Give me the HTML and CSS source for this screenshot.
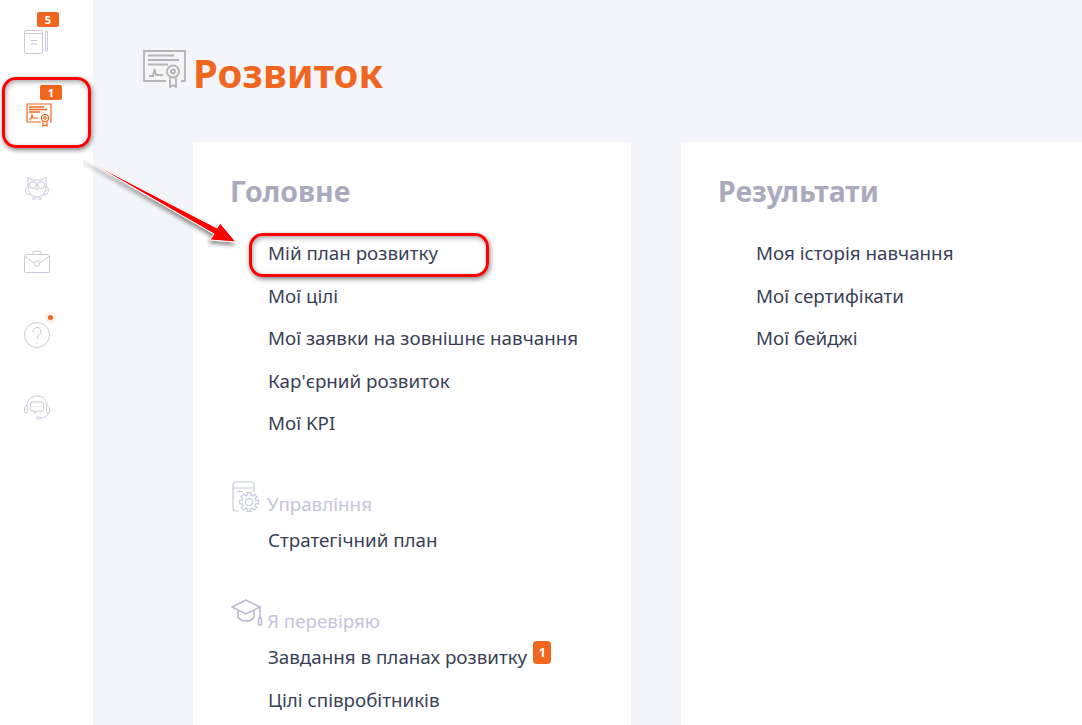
FILE: index.html
```html
<!DOCTYPE html>
<html lang="uk">
<head>
  <meta charset="UTF-8" />
  <title>Розвиток</title>
  <link rel="stylesheet" href="styles.css">
</head>
<body>
  <div class="app">
    <!-- Sidebar -->
    <nav class="sidebar">
      <a class="side-item side-first">
        <span class="side-badge">5</span>
        <svg class="side-icon" width="26" height="26" viewBox="0 0 26 26" fill="none" stroke="#c9c9dc" stroke-width="1">
          <rect x="0.5" y="1.5" width="18" height="23" rx="1.5"/>
          <path d="M0.5 4.5h18M7 11.500h6M7 15h6"/>
          <path d="M21.500 2h2v18l-1 3-1-3z"/>
        </svg>
      </a>
      <a class="side-item side-active">
        <span class="side-badge">1</span>
        <svg class="side-icon" width="26" height="24" viewBox="0 0 26 24" fill="none" stroke="#f0661f" stroke-width="1.200">
          <path d="M15 19H1V1h24v18h-1"/>
          <path d="M3 4h15M3 6.500h18M3 9h11" stroke-width="1.400"/>
          <path d="M3 16h2l1-4 1 3h5"/>
          <circle cx="19" cy="15" r="3.500"/>
          <circle cx="19" cy="15" r="1.200"/>
          <path d="M17 18.500V23l2-1 2 1v-4.500"/>
        </svg>
      </a>
      <a class="side-item">
        <svg class="side-icon" width="26" height="26" viewBox="0 0 26 26" fill="none" stroke="#c9c9dc" stroke-width="1">
          <path d="M4 1l4 3h10l4-3v9c0 7-4 11-9 11S4 17 4 10z"/>
          <circle cx="9" cy="9" r="3.500"/>
          <circle cx="17" cy="9" r="3.500"/>
          <path d="M12 12l1 2 1-2M4 10c-3 2-3 6-1 8l4 1M22 10c3 2 3 6 1 8l-4 1"/>
          <path d="M9 21v3M11 21v3M15 21v3M17 21v3"/>
        </svg>
      </a>
      <a class="side-item">
        <svg class="side-icon" width="26" height="23" viewBox="0 0 26 23" fill="none" stroke="#c9c9dc" stroke-width="1">
          <rect x="0.500" y="4.500" width="25" height="18" rx="1"/>
          <path d="M9 4.500V1.500h8v3"/>
          <path d="M0.500 6l9.500 7M25.500 6L16 13"/>
          <rect x="10.500" y="11" width="5" height="5" rx="1.500"/>
        </svg>
      </a>
      <a class="side-item">
        <span class="side-dot"></span>
        <svg class="side-icon" width="26" height="26" viewBox="0 0 26 26" fill="none" stroke="#c9c9dc" stroke-width="1">
          <circle cx="13" cy="13" r="12.500"/>
          <path d="M9 10c0-3 2-4.500 4-4.500s4 1.500 4 4c0 3-4 3.500-4 7.500"/>
          <path d="M13 20v1.500"/>
        </svg>
      </a>
      <a class="side-item">
        <svg class="side-icon" width="26" height="25" viewBox="0 0 26 25" fill="none" stroke="#c9c9dc" stroke-width="1">
          <path d="M3 11C3 4 8 1 13 1s10 3 10 10"/>
          <rect x="0.500" y="11" width="3" height="7" rx="1.500"/>
          <rect x="22.500" y="11" width="3" height="7" rx="1.500"/>
          <path d="M8 7h10a1.500 1.500 0 0 1 1.500 1.500v6A1.500 1.500 0 0 1 18 16h-5l-2 2.500V16H8a1.500 1.500 0 0 1-1.500-1.500v-6A1.500 1.500 0 0 1 8 7z"/>
          <path d="M9.500 11.500h1M12.500 11.500h1M15.500 11.500h1"/>
          <path d="M24 18c0 3-3 5-8 5"/>
          <rect x="12.500" y="22" width="4" height="2" rx="1"/>
        </svg>
      </a>
    </nav>

    <!-- Main -->
    <main class="main">
      <header class="page-head">
        <svg class="page-icon" width="44" height="38" viewBox="0 0 44 38" fill="none" stroke="#b5b5b8" stroke-width="1.800">
          <path d="M23 31H1V1h41v30h-4"/>
          <path d="M5 5.500h26M5 10h31M5 14.500h20" stroke-width="2"/>
          <path d="M6 26h4l1.500-7 1.500 6h7"/>
          <circle cx="30" cy="21.500" r="6"/>
          <circle cx="30" cy="21.500" r="2"/>
          <path d="M27 27.500V37l3-2 3 2v-9.500"/>
        </svg>
        <h1>Розвиток</h1>
      </header>

      <div class="columns">
        <section class="card">
          <h2>Головне</h2>
          <ul class="links">
            <li>Мій план розвитку</li>
            <li>Мої цілі</li>
            <li>Мої заявки на зовнішнє навчання</li>
            <li>Кар'єрний розвиток</li>
            <li>Мої KPI</li>
          </ul>

          <div class="group group-manage">
            <svg width="28" height="32" viewBox="0 0 28 32" fill="none" stroke="#c6cadf" stroke-width="1.200">
              <path d="M7 30H4a3 3 0 0 1-3-3V4a3 3 0 0 1 3-3h16a2 2 0 0 1 2 2v8"/>
              <path d="M1 7h21M5 10.500h6"/>
              <circle cx="17" cy="21" r="3.500"/>
              <path transform="translate(17 21)" d="M-1.810-6.760-1.810-9.330 1.810-9.330 1.810-6.760 3.500-6.060 5.310-7.880 7.880-5.310 6.060-3.500 6.760-1.810 9.330-1.810 9.330 1.810 6.760 1.810 6.060 3.500 7.880 5.310 5.310 7.880 3.500 6.060 1.810 6.760 1.810 9.330-1.810 9.330-1.810 6.760-3.500 6.060-5.310 7.880-7.880 5.310-6.060 3.500-6.760 1.810-9.330 1.810-9.330-1.810-6.760-1.810-6.060-3.500-7.880-5.310-5.310-7.880-3.500-6.060z"/>
            </svg>
            <span>Управління</span>
          </div>
          <ul class="links">
            <li>Стратегічний план</li>
          </ul>

          <div class="group group-check">
            <svg width="32" height="28" viewBox="0 0 32 28" fill="none" stroke="#b5b8cc" stroke-width="1.500">
              <path d="M15 1L1 8l14 7 14-7z"/>
              <path d="M7 11.500V18c2 3 5 4 8 4s6-1 8-4v-6.500"/>
              <path d="M29 8v11"/>
              <rect x="27.500" y="19" width="3" height="7" rx="1.500"/>
            </svg>
            <span>Я перевіряю</span>
          </div>
          <ul class="links">
            <li>Завдання в планах розвитку<span class="count">1</span></li>
            <li>Цілі співробітників</li>
          </ul>
        </section>

        <section class="card">
          <h2>Результати</h2>
          <ul class="links">
            <li>Моя історія навчання</li>
            <li>Мої сертифікати</li>
            <li>Мої бейджі</li>
          </ul>
        </section>
      </div>
    </main>
  </div>

  <!-- Callouts drawn over the page -->
  <div class="callout callout-side"></div>
  <div class="callout callout-link"></div>
  <svg class="callout-arrow" width="180" height="100" viewBox="0 0 180 100">
    <defs>
      <filter id="arrow-shadow" x="-10%" y="-20%" width="120%" height="150%">
        <feDropShadow dx="-1" dy="3" stdDeviation="2" flood-color="#000" flood-opacity="0.45"/>
      </filter>
    </defs>
    <path d="M1 1L134 70 137 65 153 84 127 82 131 76z" fill="#f00" stroke="#fff" stroke-width="1" filter="url(#arrow-shadow)"/>
  </svg>
</body>
</html>
```

FILE: styles.css
```css
html, body {
  margin: 0;
  height: 100%;
  overflow: hidden;
}

body {
  font-family: "Noto Sans", "Open Sans", sans-serif;
  background-color: #f4f5fa;
  color: #3a3f56;
}

.app {
  display: flex;
  height: 725px;
}

/* Sidebar */
.sidebar {
  width: 93px;
  flex-shrink: 0;
  background-color: white;
  display: flex;
  flex-direction: column;
  align-items: center;
  padding-right: 20px;
  box-sizing: border-box;
}

.side-item {
  position: relative;
  height: 73px;
  display: flex;
  justify-content: center;
  align-items: center;
  width: 50px;
}

.side-first {
  height: 84px;
}

.side-first .side-badge {
  top: 12px;
  left: 25.500px;
}

.side-active {
  height: 62px;
  padding-left: 4px;
  padding-bottom: 6px;
  box-sizing: content-box;
}

.side-badge {
  position: absolute;
  top: 1px;
  left: 30.500px;
  width: 22px;
  height: 15px;
  border-radius: 2px;
  background-color: #f0661f;
  color: white;
  font-size: 11px;
  font-weight: 700;
  line-height: 15px;
  text-align: center;
}

.side-dot {
  position: absolute;
  top: 17px;
  left: 36px;
  width: 5px;
  height: 5px;
  border-radius: 50%;
  background-color: #f0661f;
  box-shadow: 0 0 0 3px #fdf0e9;
}

/* Main */
.main {
  flex: 1;
  min-width: 0;
  padding-left: 50px;
}

.page-head {
  display: flex;
  align-items: center;
  height: 142px;
}

.page-icon {
  margin-top: -4px;
  margin-right: 6px;
}

h1 {
  margin: 3px 0 0;
  color: #f0661f;
  font-size: 40px;
  font-weight: 700;
}

.columns {
  display: flex;
  gap: 50px;
  padding-left: 50px;
}

.card {
  background-color: white;
  height: 583px;
  box-sizing: border-box;
  padding: 31px 38px;
  flex-shrink: 0;
  width: 438px;
}

h2 {
  margin: 0 0 23px -1px;
  color: #a9abbd;
  font-size: 28.500px;
  font-weight: 700;
  line-height: 36px;
}

.links {
  list-style: none;
  margin: 0;
  padding: 0 0 0 37px;
  font-size: 18.800px;
}

.links li {
  height: 42.500px;
  line-height: 42.500px;
  white-space: nowrap;
}

.count {
  display: inline-block;
  vertical-align: 7px;
  width: 18px;
  height: 23px;
  margin-left: 6px;
  border-radius: 4px;
  background-color: #f0661f;
  color: white;
  font-size: 13px;
  font-weight: 700;
  line-height: 22px;
  text-align: center;
}

.group {
  display: flex;
  align-items: flex-end;
  height: 37px;
  margin-top: 34.500px;
  padding-bottom: 3px;
  color: #c3c6da;
  font-size: 18.800px;
  line-height: 24px;
}

.group-manage svg {
  margin: 0 7px 3px 1px;
}

.group-check svg {
  margin: 0 4px 6px 0;
}

/* Callouts */
.callout {
  position: absolute;
  box-sizing: border-box;
  border: 3px solid #f00;
  border-radius: 14px;
  box-shadow: 1px 2px 5px rgba(0, 0, 0, 0.5), inset 1px 2px 5px rgba(0, 0, 0, 0.35);
}

.callout-side {
  left: 2px;
  top: 77px;
  width: 89px;
  height: 71px;
}

.callout-link {
  left: 249px;
  top: 233px;
  width: 240px;
  height: 44px;
}

.callout-arrow {
  position: absolute;
  left: 83px;
  top: 158px;
}
```
